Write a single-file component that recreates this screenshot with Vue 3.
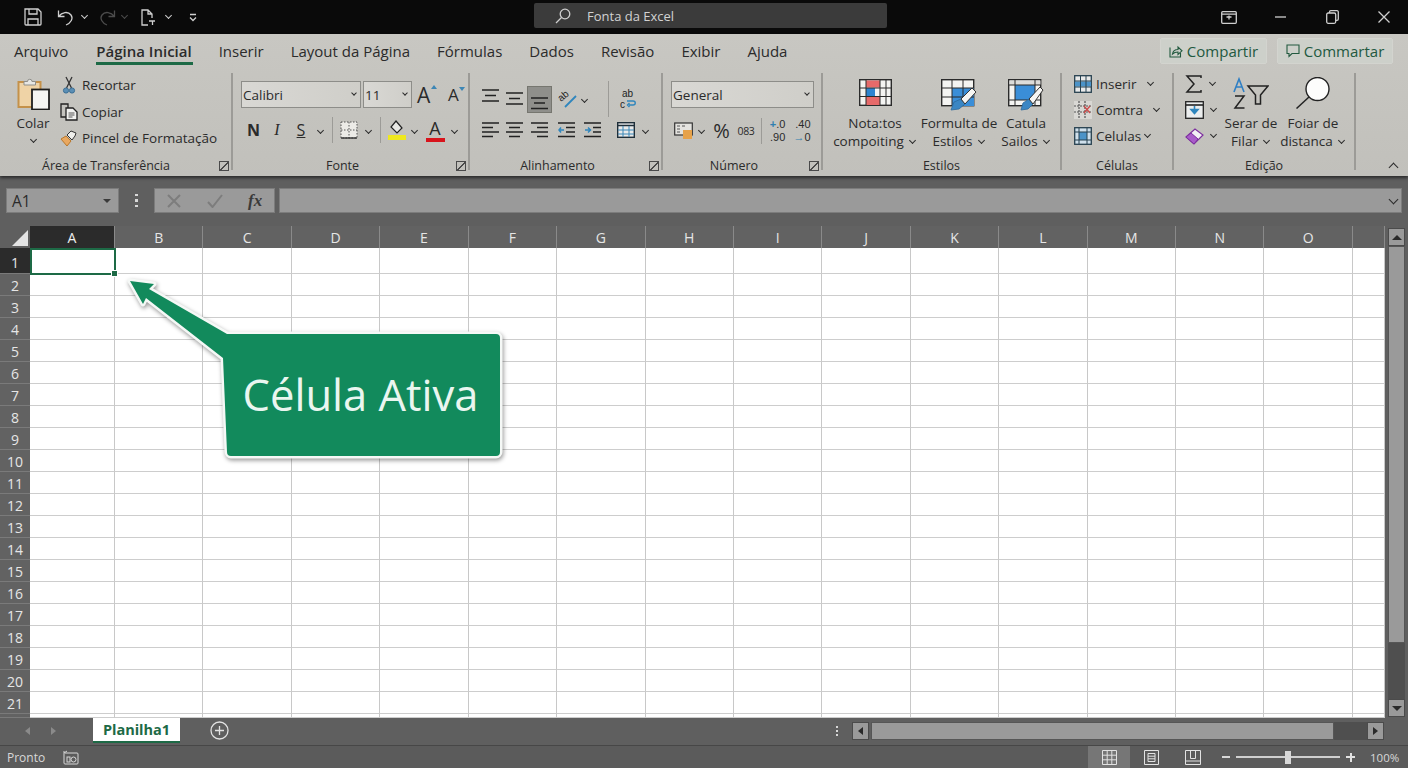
<script setup>
const tabs = ['Arquivo', 'Página Inicial', 'Inserir', 'Layout da Página', 'Fórmulas', 'Dados', 'Revisão', 'Exibir', 'Ajuda']
const cols = ['A', 'B', 'C', 'D', 'E', 'F', 'G', 'H', 'I', 'J', 'K', 'L', 'M', 'N', 'O', '']
const rows = Array.from({ length: 21 }, (_, i) => i + 1)
</script>

<template>
  <div class="app">
    <!-- title bar -->
    <header class="titlebar">
      <div class="qat">
        <svg class="ic-save" width="18" height="18" viewBox="0 0 18 18"><path d="M1 1h13l3 3v12a1 1 0 0 1-1 1H2a1 1 0 0 1-1-1z M5 1v5h8V1 M4 17v-6h10v6" /></svg>
        <svg class="ic-undo" width="17" height="17" viewBox="0 0 17 17"><path d="M1.500 1.500v6h6 M1.500 7.500C5 3 11 2 14 6c2.500 3.500 0 8-5 10" /></svg>
        <span class="chev light c-undo"></span>
        <svg class="ic-redo" width="17" height="17" viewBox="0 0 17 17"><path d="M15.500 1.500v6h-6 M15.500 7.500C12 3 6 2 3 6c-2.500 3.500 0 8 5 10" /></svg>
        <span class="chev dim c-redo"></span>
        <svg class="ic-new" width="17" height="17" viewBox="0 0 17 17"><path d="M8 16H2V1h6l4 4v4 M8 1v4h4 M9 12h6 M12.500 12v4" /></svg>
        <span class="chev light c-new"></span>
        <svg class="ic-more" width="8" height="9" viewBox="0 0 8 9"><path d="M1 1.500h6 M1 4.500l3 3 3-3" /></svg>
      </div>
      <div class="search">
        <svg width="16" height="16" viewBox="0 0 16 16"><circle cx="10" cy="6" r="4.800" /><path d="M6.500 9.500L1 15" /></svg>
        <span>Fonta da Excel</span>
      </div>
      <div class="winctl">
        <svg class="w-disp" width="16" height="13" viewBox="0 0 16 13"><rect x="0.700" y="0.700" width="14.600" height="11.600" rx="1" /><path d="M1 3.200h14 M5.500 6h5 M8 4.500v4" /></svg>
        <svg class="w-min" width="11" height="2" viewBox="0 0 11 2"><path d="M0 1h11" /></svg>
        <svg class="w-rest" width="13" height="14" viewBox="0 0 13 14"><rect x="0.700" y="3" width="9" height="10.300" rx="1.500" /><path d="M3.500 3V2a1.300 1.300 0 0 1 1.300-1.300h6A1.300 1.300 0 0 1 12.300 2v7a1.300 1.300 0 0 1-1.300 1.300h-1.300" /></svg>
        <svg class="w-close" width="12" height="12" viewBox="0 0 12 12"><path d="M0.500 0.500l11 11 M11.500 0.500l-11 11" /></svg>
      </div>
    </header>

    <!-- ribbon -->
    <section class="ribbon">
      <nav class="tabs">
        <span v-for="t in tabs" :key="t" class="tab" :class="{ active: t === 'Página Inicial' }">{{ t }}</span>
        <div class="share">
          <button class="sbtn">
            <svg width="14" height="14" viewBox="0 0 14 14"><path d="M1 3.500V13h10.500V9 M3.500 10c.5-3 2.500-4.500 5.500-4.500V3l4 3.800-4 3.700V8C6.500 8 5 8.500 3.500 10z" /></svg>
            Compartir
          </button>
          <button class="sbtn cmt">
            <svg width="14" height="14" viewBox="0 0 14 14"><path d="M1 1h12v8.500H6L3 12.500v-3H1z" /></svg>
            Commartar
          </button>
        </div>
      </nav>

      <div class="groups">
        <!-- Área de Transferência -->
        <div class="group g-clip">
          <div class="body clip-body">
            <div class="colar">
              <svg width="33" height="33" viewBox="0 0 33 33" class="multi">
                <rect x="1.500" y="5" width="22" height="25" fill="#efd3a6" stroke="#c4914a" stroke-width="2" />
                <path d="M7 8V4.500h3.500a2.200 2.200 0 0 1 4.500 0H18.500V8z" fill="#e7e7e4" stroke="#8f8f8b" />
                <rect x="15" y="12.500" width="17" height="20" fill="#f5f5f3" stroke="#1e1e1e" stroke-width="1.800" />
              </svg>
              <span class="txt">Colar</span>
              <span class="chev"></span>
            </div>
            <div class="cliplist">
              <div class="cliprow">
                <svg class="multi" width="18" height="18" viewBox="0 0 18 18"><path d="M6 1l5.500 11 M12 1L6.500 12" stroke="#333" stroke-width="1.300" /><circle cx="6" cy="14.500" r="2.600" fill="#5b8fb5" stroke="#3d6f94" /><circle cx="12" cy="14.500" r="2.600" fill="#5b8fb5" stroke="#3d6f94" /></svg>
                <span class="txt">Recortar</span>
              </div>
              <div class="cliprow">
                <svg class="multi" width="18" height="18" viewBox="0 0 18 18"><path d="M6 14H1V1h7v4" stroke="#222" stroke-width="1.300" fill="none" /><path d="M6 5h7l4 4v8H6z" fill="#f2f2f0" stroke="#222" stroke-width="1.300" /><path d="M8.500 10h6 M8.500 12h6 M8.500 14h4" stroke="#555" /></svg>
                <span class="txt">Copiar</span>
              </div>
              <div class="cliprow">
                <svg class="multi" width="18" height="18" viewBox="0 0 18 18"><path d="M1 10l6 7 4-5-5-5z" fill="#e9a860" stroke="#b9782c" /><path d="M7 6l4-4 5 2-1 3-3 4z" fill="#efefec" stroke="#333" /></svg>
                <span class="txt">Pincel de Formatação</span>
              </div>
            </div>
          </div>
          <div class="glabel"><span>Área de Transferência</span><i class="launch"></i></div>
        </div>

        <!-- Fonte -->
        <div class="group g-font">
          <div class="body">
            <div class="row1">
              <div class="select s-font"><span>Calibri</span><span class="chev"></span></div>
              <div class="select s-size"><span>11</span><span class="chev"></span></div>
              <span class="growa">A<i class="tri up"></i></span>
              <span class="growa small">A<i class="tri down"></i></span>
            </div>
            <div class="row2 grid-font">
              <b class="fmt">N</b>
              <i class="fmt serif">I</i>
              <span class="fmt under">S</span>
              <span class="chev"></span>
              <span class="vsep"></span>
              <svg width="18" height="18" viewBox="0 0 18 18" class="multi"><rect x="1" y="1" width="16" height="16" fill="#ecebe7" /><path d="M1 1h16v16H1z M9 1v16 M1 9h16" stroke="#555" stroke-dasharray="1.500 1.500" /><path d="M1 17h16" stroke="#333" stroke-width="1.400" /></svg>
              <span class="chev"></span>
              <span class="vsep"></span>
              <svg width="20" height="20" viewBox="0 0 20 20" class="multi"><path d="M9 1l6 7-5 5-6-6z" fill="#e8e8e4" stroke="#222" stroke-width="1.200" /><rect x="1" y="15" width="18" height="5" fill="#efe81e" /></svg>
              <span class="chev"></span>
              <span class="fonta">A</span>
              <span class="chev"></span>
            </div>
          </div>
          <div class="glabel"><span>Fonte</span><i class="launch"></i></div>
        </div>

        <!-- Alinhamento -->
        <div class="group g-align">
          <div class="body">
            <div class="row1 grid-al1">
              <svg class="al" width="17" height="21" viewBox="0 0 17 21"><path d="M0 1h17 M3 6.500h11 M0 12h17" /></svg>
              <svg class="al" width="17" height="21" viewBox="0 0 17 21"><path d="M0 4h17 M3 9.500h11 M0 15h17" /></svg>
              <span class="albtn"><svg class="al" width="17" height="21" viewBox="0 0 17 21"><path d="M0 9h17 M3 14h11 M0 19.500h17" /></svg></span>
              <svg class="multi open" width="21" height="20" viewBox="0 0 21 20"><text x="5" y="13" transform="rotate(-40 5 13)" class="icotext">ab</text><path d="M9 18L20 7" stroke="#2f86bd" stroke-width="1.800" /></svg>
              <span class="chev"></span>
              <span class="vsep tall end"></span>
              <svg class="multi" width="18" height="23" viewBox="0 0 18 23"><text x="3" y="9" class="icotext">ab</text><text x="1" y="20" class="icotext">c</text><path d="M8 13h6c3 0 3 4 0 4h-4 M10.500 15l-2 2 2 2" stroke="#2f86bd" stroke-width="1.400" fill="none" /></svg>
            </div>
            <div class="row2 grid-al2">
              <svg class="al" width="17" height="16" viewBox="0 0 17 16"><path d="M0 1h17 M0 5.500h11 M0 10h17 M0 14.500h11" /></svg>
              <svg class="al" width="17" height="16" viewBox="0 0 17 16"><path d="M0 1h17 M3 5.500h11 M0 10h17 M3 14.500h11" /></svg>
              <svg class="al" width="17" height="16" viewBox="0 0 17 16"><path d="M0 1h17 M6 5.500h11 M0 10h17 M6 14.500h11" /></svg>
              <svg class="multi" width="17" height="16" viewBox="0 0 17 16"><path d="M0 1h17 M8 5.500h9 M8 10h9 M0 14.500h17" stroke="#222" stroke-width="1.300" /><path d="M1 8h5 M3 5.500L1 8l2 2.500" stroke="#2f86bd" stroke-width="1.500" fill="none" /></svg>
              <svg class="multi" width="17" height="16" viewBox="0 0 17 16"><path d="M0 1h17 M9 5.500h8 M9 10h8 M0 14.500h17" stroke="#222" stroke-width="1.300" /><path d="M1 8h5 M4 5.500L6.500 8 4 10.500" stroke="#2f86bd" stroke-width="1.500" fill="none" /></svg>
              <span></span>
              <svg class="multi" width="18" height="16" viewBox="0 0 18 16"><rect x="0.700" y="0.700" width="16.600" height="14.600" fill="#e9eaea" stroke="#1f2f3a" stroke-width="1.400" /><path d="M1 3.500h16" stroke="#1f2f3a" stroke-width="1.500" /><path d="M1 8h16 M1 12h16 M6 4v11 M12 4v11" stroke="#3a88b8" /></svg>
              <span class="chev"></span>
            </div>
          </div>
          <div class="glabel"><span>Alinhamento</span><i class="launch"></i></div>
        </div>

        <!-- Número -->
        <div class="group g-num">
          <div class="body">
            <div class="row1">
              <div class="select s-gen"><span>General</span><span class="chev"></span></div>
            </div>
            <div class="row2 grid-num">
              <svg class="multi" width="19" height="18" viewBox="0 0 19 18"><rect x="0.700" y="1" width="17.600" height="12" fill="#e4e3df" stroke="#333" stroke-width="1.200" /><path d="M3 4h3 M3 7h3 M3 10h3 M8 4h3" stroke="#555" /><rect x="9" y="8" width="9" height="9" fill="#e6a24a" /></svg>
              <span class="chev"></span>
              <span class="pct">%</span>
              <span class="thou">083</span>
              <span class="vsep"></span>
              <span class="dec"><span><b>+</b>.0</span><span>.90</span></span>
              <span class="dec"><span>.40</span><span><b>→</b>0</span></span>
            </div>
          </div>
          <div class="glabel"><span>Número</span><i class="launch"></i></div>
        </div>

        <!-- Estilos -->
        <div class="group g-style">
          <div class="body big-row">
            <div class="big b1">
              <svg class="multi" width="33" height="27" viewBox="0 0 33 27">
                <rect x="0.700" y="0.700" width="31.600" height="25.600" fill="#f4f4f2" stroke="#2b2b2b" stroke-width="1.400" />
                <rect x="7" y="1.500" width="14" height="7" fill="#e66a6a" />
                <rect x="7" y="18" width="14" height="8" fill="#e66a6a" />
                <rect x="7" y="9" width="9" height="8.500" fill="#2d84d0" />
                <path d="M1 9h31 M1 17.500h31 M7 1v25 M21 1v25 M27 1v25" stroke="#2b2b2b" stroke-width="1" />
              </svg>
              <span class="txt">Nota:tos</span>
              <span class="txt">compoiting<span class="chev inl"></span></span>
            </div>
            <div class="big b2">
              <svg class="multi" width="36" height="32" viewBox="0 0 36 32">
                <rect x="0.700" y="0.700" width="32" height="26" fill="#f4f4f2" stroke="#2b2b2b" stroke-width="1.400" />
                <rect x="11" y="9" width="22" height="18" fill="#3a8ed8" />
                <path d="M1 9h32 M1 18h32 M11 1v26 M22 1v26" stroke="#2b2b2b" stroke-width="1" />
                <path d="M10 31l3-8 7-3 4 5-6 5z" fill="#3a86c4" stroke="#2c6a9c" stroke-width="0.800" />
                <path d="M20 20L31 9l4 4-11 12z" fill="#f6f6f4" stroke="#333" stroke-width="1" />
              </svg>
              <span class="txt">Formulta de</span>
              <span class="txt">Estilos<span class="chev inl"></span></span>
            </div>
            <div class="big b3">
              <svg class="multi" width="36" height="32" viewBox="0 0 36 32">
                <rect x="0.700" y="0.700" width="32" height="26" fill="#f4f4f2" stroke="#2b2b2b" stroke-width="1.400" />
                <rect x="1.500" y="1.500" width="31" height="4.500" fill="#dcdcda" />
                <rect x="7" y="6" width="20" height="15" fill="#3a8ed8" />
                <path d="M1 6h32 M1 21h32 M7 1v26 M27 1v26" stroke="#2b2b2b" stroke-width="1" />
                <path d="M13 31l2-7 6-4 4 5-5 5z" fill="#3a86c4" stroke="#2c6a9c" stroke-width="0.800" />
                <path d="M21 20L32 8l3 3-10 14z" fill="#f6f6f4" stroke="#333" stroke-width="1" />
              </svg>
              <span class="txt">Catula</span>
              <span class="txt">Sailos<span class="chev inl"></span></span>
            </div>
          </div>
          <div class="glabel"><span>Estilos</span></div>
        </div>

        <!-- Células -->
        <div class="group g-cell">
          <div class="body celllist">
            <div class="cliprow">
              <svg class="multi" width="18" height="18" viewBox="0 0 18 18"><rect x="0.700" y="0.700" width="16.600" height="16.600" fill="#e9eaea" stroke="#26404f" stroke-width="1.300" /><rect x="1" y="6.500" width="16" height="5" fill="#4b93c8" /><path d="M1 6h16 M1 12h16 M6.500 1v16 M12 1v16" stroke="#26404f" /></svg>
              <span class="txt">Inserir</span><span class="chev m-ins"></span>
            </div>
            <div class="cliprow">
              <svg class="multi" width="18" height="18" viewBox="0 0 18 18"><rect x="0" y="0" width="18" height="18" fill="#d9d8d4" /><path d="M0 5h18 M0 11h18 M5 0v18 M11 0v18" stroke="#555" stroke-width="1.200" stroke-dasharray="2 1" /><path d="M10 5l6 7 M16 5l-6 7" stroke="#cc4b4b" stroke-width="1.300" /></svg>
              <span class="txt">Comtra</span><span class="chev m-ins"></span>
            </div>
            <div class="cliprow">
              <svg class="multi" width="18" height="18" viewBox="0 0 18 18"><rect x="0.700" y="0.700" width="16.600" height="16.600" fill="#cfe0ec" stroke="#26404f" stroke-width="1.300" /><rect x="5" y="5" width="8" height="8" fill="#4b93c8" /><path d="M1 5h16 M1 13h16 M5 1v16 M13 1v16" stroke="#26404f" /></svg>
              <span class="txt">Celulas</span><span class="chev"></span>
            </div>
          </div>
          <div class="glabel"><span>Células</span></div>
        </div>

        <!-- Edição -->
        <div class="group g-edit">
          <div class="body big-row edit-row">
            <div class="editlist">
              <div class="cliprow">
                <svg class="ic-dark" width="18" height="18" viewBox="0 0 18 18"><path d="M16 3V1H2l7 8-7 8h14v-2" /></svg>
                <span class="chev m-ed"></span>
              </div>
              <div class="cliprow">
                <svg class="multi" width="19" height="18" viewBox="0 0 19 18"><rect x="0.700" y="0.700" width="17.600" height="16.600" fill="#eceeee" stroke="#222" stroke-width="1.300" /><path d="M1 4h17" stroke="#222" stroke-width="1.600" /><path d="M9.500 5v6 M6 8.500h7l-3.500 4z" stroke="#2f86bd" fill="#2f86bd" stroke-width="1.600" /></svg>
                <span class="chev m-ed"></span>
              </div>
              <div class="cliprow">
                <svg class="multi" width="19" height="18" viewBox="0 0 19 18"><path d="M1 10l9-8 8 6-9 9z" fill="#f2f0f4" stroke="#7d2f9e" stroke-width="1.200" /><path d="M1 10l5-4 7 6-4 5z" fill="#a85cc9" stroke="#7d2f9e" /></svg>
                <span class="chev m-ed"></span>
              </div>
            </div>
            <div class="big b-sort">
              <svg class="multi" width="36" height="32" viewBox="0 0 36 32">
                <path d="M1 15L6 2l5 13 M3 10h6" stroke="#2f7fc4" stroke-width="1.600" fill="none" />
                <path d="M2 19h9l-9 12h9.500" stroke="#222" stroke-width="1.500" fill="none" />
                <path d="M15 9h20l-7.500 9v9h-5v-9z" stroke="#222" stroke-width="1.500" fill="none" />
              </svg>
              <span class="txt">Serar de</span>
              <span class="txt">Filar<span class="chev inl"></span></span>
            </div>
            <div class="big b-find">
              <svg class="multi" width="34" height="32" viewBox="0 0 34 32">
                <circle cx="21.500" cy="12" r="11.500" fill="#fdfdfc" stroke="#222" stroke-width="1.400" />
                <path d="M13 20L0.500 31.500" stroke="#222" stroke-width="1.500" />
              </svg>
              <span class="txt">Foiar de</span>
              <span class="txt">distanca<span class="chev inl"></span></span>
            </div>
          </div>
          <div class="glabel"><span>Edição</span></div>
        </div>

        <div class="collapse"><span class="chev upc"></span></div>
      </div>
    </section>

    <!-- formula bar -->
    <section class="fbar">
      <div class="namebox"><span>A1</span><i class="tri-down"></i></div>
      <div class="dots"><i></i><i></i><i></i></div>
      <div class="fxbox">
        <svg width="14" height="14" viewBox="0 0 14 14" class="fx-i"><path d="M1 1l12 12 M13 1L1 13" /></svg>
        <svg width="16" height="14" viewBox="0 0 16 14" class="fx-i"><path d="M1 8l4.500 5L15 1" /></svg>
        <span class="fx">fx</span>
      </div>
      <div class="finput"><span class="chev fchev"></span></div>
    </section>

    <!-- grid -->
    <section class="gridwrap">
      <div class="sheet">
        <div class="corner"><i></i></div>
        <div v-for="(c, i) in cols" :key="'h' + i" class="colh" :class="{ on: c === 'A' }">{{ c }}</div>
        <template v-for="r in rows" :key="r">
          <div class="rowh" :class="{ on: r === 1 }">{{ r }}</div>
          <div v-for="(c, i) in cols" :key="i" class="cell">
            <template v-if="r === 1 && c === 'A'">
              <div class="selected"><i class="handle"></i></div>
            </template>
          </div>
        </template>
        <div class="rowh"></div>
        <div v-for="(c, i) in cols" :key="'t' + i" class="cell"></div>
      </div>
      <div class="vscroll">
        <div class="sbtn2"><i class="tri-up"></i></div>
        <div class="vthumb"></div>
        <div class="vtrack"></div>
        <div class="sbtn2"><i class="tri-down dark"></i></div>
      </div>
    </section>

    <!-- sheet tabs -->
    <section class="sheetbar">
      <div class="tabnav"><i class="tri-l"></i><i class="tri-r"></i></div>
      <div class="sheettab">Planilha1</div>
      <svg class="addsheet" width="19" height="19" viewBox="0 0 19 19"><circle cx="9.500" cy="9.500" r="8.500" /><path d="M9.500 5v9 M5 9.500h9" /></svg>
      <div class="dots small"><i></i><i></i><i></i></div>
      <div class="hscroll">
        <div class="hbtn"><i class="tri-l dark"></i></div>
        <div class="hthumb"></div>
        <div class="htrack"></div>
        <div class="hbtn"><i class="tri-r dark"></i></div>
      </div>
    </section>

    <!-- status bar -->
    <footer class="status">
      <span class="pronto">Pronto</span>
      <svg class="macro" width="16" height="15" viewBox="0 0 16 15"><path d="M2 3h12a1 1 0 0 1 1 1v9a1 1 0 0 1-1 1H2a1 1 0 0 1-1-1V1 M1 3L4 1" /><rect x="4" y="7" width="3" height="5" /><circle cx="10.500" cy="9.500" r="2.500" /></svg>
      <div class="views">
        <div class="view on"><svg width="15" height="15" viewBox="0 0 15 15"><path d="M.5.500h14v14H.5z M.5 5.200h14 M.5 9.800h14 M5.200.500v14 M9.800.500v14" /></svg></div>
        <div class="view"><svg width="15" height="15" viewBox="0 0 15 15"><path d="M.5.500h14v14H.5z M4 3.500h7v8H4z M4 6.200h7 M4 8.800h7" /></svg></div>
        <div class="view"><svg width="16" height="15" viewBox="0 0 16 15"><path d="M.5.500h15v14H.5z M5.500.500v8h5v-8 M.5 11h15" /></svg></div>
      </div>
      <div class="zoombar">
        <i class="zminus"></i>
        <div class="slider"><i></i></div>
        <i class="zplus"></i>
      </div>
      <span class="pct100">100%</span>
    </footer>

    <!-- callout over the grid -->
    <div class="callout">
      <svg width="390" height="200" viewBox="0 0 390 200">
        <path d="M10 11L34 14 29 19 107 64H376a4 4 0 0 1 4 4V182a4 4 0 0 1-4 4H111a4 4 0 0 1-4-4L103 88 26 28 23 34z" />
      </svg>
      <div class="calltext">Célula Ativa</div>
    </div>
  </div>
</template>

<style>
html, body { margin: 0; background: #5f5f5f; }
</style>

<style scoped>
.app {
  position: relative;
  width: 1408px;
  height: 768px;
  overflow: hidden;
  display: flex;
  flex-direction: column;
  font-family: "Open Sans", "Liberation Sans", sans-serif;
  color: #2b2b2b;
  background: #5f5f5f;
}

svg { fill: none; display: block; flex-shrink: 0; }
svg.open { overflow: visible; }
i { font-style: normal; }

.icotext {
  font: 10px "Liberation Sans", sans-serif;
  fill: #222;
}

/* chevrons */
.chev {
  display: inline-block;
  width: 4px;
  height: 4px;
  border-right: 1.300px solid #2b2b2b;
  border-bottom: 1.300px solid #2b2b2b;
  transform: rotate(45deg);
  flex-shrink: 0;
}
.chev.light { border-color: #cfcfcf; }
.chev.dim { border-color: #4c4c4c; }
.chev.inl { margin: 0 2px 3px 6px; vertical-align: middle; }
.chev.upc { transform: rotate(225deg); width: 6px; height: 6px; border-width: 1.600px; }
.m-ins { margin-left: 7px; }
.m-ed { margin-left: 3px; }

/* title bar */
.titlebar {
  height: 34px;
  background: #0a0a0a;
  display: flex;
  align-items: center;
  flex-shrink: 0;
}
.titlebar svg { stroke: #cfcfcf; stroke-width: 1.300; }
.qat {
  width: 534px;
  display: flex;
  align-items: center;
  padding-left: 24px;
  box-sizing: border-box;
}
.ic-undo { margin-left: 15px; }
.c-undo { margin-left: 8px; margin-bottom: 3px; }
.titlebar .ic-redo { margin-left: 12px; stroke: #4c4c4c; }
.c-redo { margin-left: 6px; margin-bottom: 3px; }
.ic-new { margin-left: 13px; }
.c-new { margin-left: 9px; margin-bottom: 3px; }
.ic-more { margin-left: 18px; }
.search {
  width: 353px;
  height: 25px;
  margin-top: -3px;
  background: #3b3b3b;
  border-radius: 2px;
  display: flex;
  align-items: center;
  gap: 16px;
  padding-left: 21px;
  box-sizing: border-box;
  color: #d2d2d2;
  font-size: 13px;
}
.winctl {
  flex: 1;
  display: flex;
  align-items: center;
  padding-left: 334px;
}
.w-min { margin-left: 38px; }
.w-rest { margin-left: 40px; }
.w-close { margin-left: 39px; }

/* ribbon */
.ribbon {
  height: 142px;
  flex-shrink: 0;
  background: linear-gradient(#c8c7c2, #c1c0bb);
  box-shadow: 0 2px 3px rgba(0, 0, 0, 0.55);
  position: relative;
  z-index: 2;
}
.tabs {
  height: 34px;
  display: flex;
  align-items: center;
  gap: 27px;
  padding-left: 14px;
  font-size: 15px;
}
.tab {
  position: relative;
  line-height: 34px;
  white-space: nowrap;
}
.tab:first-child { margin-right: 1px; }
.tab.active { font-weight: 600; }
.tab.active::after {
  content: "";
  position: absolute;
  left: 0;
  right: -1px;
  bottom: 3px;
  height: 3px;
  background: #1d6a46;
}
.share {
  margin-left: auto;
  display: flex;
  gap: 10px;
  padding-right: 15px;
}
.sbtn {
  width: 107px;
  height: 26px;
  padding: 0;
  border: 1px solid #d3d4cf;
  border-radius: 2px;
  background: #cdd0ca;
  color: #22593f;
  font: 500 15px "Open Sans", sans-serif;
  display: flex;
  align-items: center;
  justify-content: center;
  gap: 4px;
}
.sbtn.cmt { width: 116px; }
.sbtn svg { stroke: #22593f; stroke-width: 1.100; }

.groups {
  display: flex;
  margin-top: 5px;
  height: 97px;
  font-size: 13.500px;
}
.group {
  display: flex;
  flex-direction: column;
  box-sizing: border-box;
  border-right: 2px solid #9c9b97;
  flex-shrink: 0;
}
.g-clip { width: 233px; }
.g-font { width: 237px; padding-left: 8px; }
.g-align { width: 193px; padding-left: 8px; }
.g-num { width: 160px; padding-left: 8px; }
.g-style { width: 239px; padding-left: 10px; }
.g-cell { width: 112px; padding-left: 12px; }
.g-edit { width: 182px; padding-left: 11px; }
.g-style .glabel { margin-left: -10px; }
.g-cell .glabel { margin-left: -12px; }
.g-edit .glabel { margin-left: -11px; }
.collapse {
  flex: 1;
  display: flex;
  justify-content: flex-end;
  align-items: flex-end;
  padding: 0 11px 0 0;
  height: 98px;
}
.body {
  height: 85px;
  flex-shrink: 0;
  box-sizing: border-box;
  padding-top: 8px;
}
.glabel {
  height: 16px;
  line-height: 16px;
  flex-shrink: 0;
  display: flex;
  align-items: center;
  font-size: 12.500px;
}
.glabel span { flex: 1; text-align: center; }
.launch {
  width: 8px;
  height: 8px;
  margin: 0 2px 0 12px;
  border: 1px solid #4a4a4a;
  background: linear-gradient(135deg, transparent 45%, #4a4a4a 45%, #4a4a4a 60%, transparent 60%);
}
.g-clip .launch { margin-left: 7px; }
.txt { white-space: nowrap; line-height: 18px; }

/* clipboard */
.clip-body { display: flex; padding-top: 0; }
.colar {
  width: 46px;
  margin-left: 10px;
  padding-top: 4px;
  display: flex;
  flex-direction: column;
  align-items: center;
}
.colar .txt { margin-top: 4px; }
.colar .chev { margin-top: 5px; }
.cliplist { margin-left: 4px; margin-top: -1px; }
.cliprow {
  height: 26.500px;
  display: flex;
  align-items: center;
  gap: 4px;
}
.cliprow .chev { margin-bottom: 3px; }
.celllist .cliprow, .editlist .cliprow { height: 26px; }

/* fonte */
.row1 { height: 27px; display: flex; align-items: center; }
.row2 { height: 26px; margin-top: 9px; display: grid; align-items: center; justify-items: center; }
.select {
  height: 27px;
  box-sizing: border-box;
  border: 1.500px solid #8d8d89;
  background: linear-gradient(90deg, #d9d8d4, #cfcec9);
  display: flex;
  align-items: center;
  justify-content: space-between;
  padding: 0 4px 0 1px;
  font-size: 13.500px;
}
.select .chev { margin-bottom: 3px; width: 3px; height: 3px; }
.s-font { width: 120px; }
.s-size { width: 49px; margin-left: 2px; }
.s-gen { width: 143px; }
.growa { font-size: 21px; position: relative; margin-left: 5px; width: 26px; }
.growa.small { font-size: 17px; width: 20px; }
.tri {
  position: absolute;
  top: 4px;
  left: 14px;
  border-left: 3px solid transparent;
  border-right: 3px solid transparent;
}
.tri.up { border-bottom: 4px solid #3c86b5; }
.tri.down { border-top: 4px solid #3c86b5; left: 11px; }
.grid-font { grid-template-columns: 23px 24px 24px 14px 10px 24px 14px 10px 24px 10px 32px 6px; margin-left: 1px; }
.fmt { font-size: 16px; }
b.fmt { font-weight: 700; }
.serif { font-family: "Liberation Serif", serif; font-style: italic; font-size: 16px; }
.under { text-decoration: underline; }
.vsep { width: 1px; height: 26px; background: #9c9b97; }
.vsep.tall { height: 36px; align-self: start; }
.vsep.end { justify-self: end; margin-right: 1px; }
.fonta {
  font-size: 18px;
  line-height: 20px;
  border-bottom: 4px solid #d8141c;
  width: 19px;
  text-align: center;
  height: 20px;
}

/* alinhamento */
.al { stroke: #222; stroke-width: 1.400; }
.g-align .row1 { display: grid; align-items: center; justify-items: center; }
.grid-al1 { grid-template-columns: 24px 25px 25px 28px 8px 22px 35px; }
.grid-al2 { grid-template-columns: 24px 25px 25px 28px 24px 6px 32px 6px; }
.albtn {
  width: 25px;
  height: 27px;
  background: #8f8f8b;
  border: 1px solid #76766f;
  box-sizing: border-box;
  display: flex;
  align-items: center;
  justify-content: center;
}

/* numero */
.grid-num { grid-template-columns: 25px 10px 31px 18px 12px 21px 28px; }
.pct { font-size: 20px; }
.thou { font-size: 10.500px; letter-spacing: -0.300px; }
.dec {
  display: flex;
  flex-direction: column;
  align-items: flex-end;
  font: 11px/12.700px "Liberation Sans", sans-serif;
}
.dec b { color: #2f7fb0; font-weight: 700; }

/* estilos */
.big-row { display: flex; padding-top: 6px; }
.big {
  display: flex;
  flex-direction: column;
  align-items: center;
  flex-shrink: 0;
}
.big svg { margin-bottom: 8px; }
.b1 { width: 84px; }
.b2 { width: 76px; margin-left: 4px; }
.b2 svg, .b3 svg { margin-bottom: 3px; }
.b3 { width: 50px; margin-left: 4px; }

.celllist { padding-top: 0; margin-top: -2px; height: 87px; }

/* edicao */
.edit-row { padding-top: 0; }
.editlist { width: 38px; margin-top: -2px; }
.b-sort { width: 56px; padding-top: 4px; margin-left: 0; }
.b-sort svg, .b-find svg { margin-bottom: 5px; }
.b-find { width: 60px; padding-top: 4px; margin-left: 4px; }
.ic-dark { stroke: #222; stroke-width: 1.500; }

/* formula bar */
.fbar {
  height: 50px;
  flex-shrink: 0;
  box-sizing: border-box;
  padding: 12px 6px 13px;
  display: flex;
  align-items: stretch;
  background: #5f5f5f;
}
.namebox {
  width: 113px;
  box-sizing: border-box;
  background: #9a9a9a;
  border: 1px solid #7c7c7c;
  display: flex;
  align-items: center;
  justify-content: space-between;
  padding: 0 7px 0 5px;
  font-size: 15.500px;
}
.dots {
  width: 35px;
  display: flex;
  flex-direction: column;
  align-items: center;
  justify-content: center;
  gap: 3px;
}
.dots i { width: 2.500px; height: 2.500px; background: #d8d8d8; }
.dots.small { margin-left: auto; width: 14px; gap: 2px; }
.dots.small i { width: 2px; height: 2px; }
.fxbox {
  width: 121px;
  box-sizing: border-box;
  background: #9a9a9a;
  border: 1px solid #7c7c7c;
  display: flex;
  align-items: center;
  padding-left: 12px;
  gap: 26px;
}
.fx-i { stroke: #7d7d7d; stroke-width: 2; }
.fx {
  font: italic 700 17px "Liberation Serif", serif;
  color: #3a3a3a;
  margin-left: -1px;
}
.finput {
  flex: 1;
  margin-left: 4px;
  background: #9a9a9a;
  border: 1px solid #7c7c7c;
  display: flex;
  align-items: center;
  justify-content: flex-end;
  padding-right: 4px;
}
.fchev { width: 6px; height: 6px; border-width: 1.600px; margin-bottom: 3px; }
.tri-down {
  width: 0;
  height: 0;
  border-left: 4px solid transparent;
  border-right: 4px solid transparent;
  border-top: 4px solid #3a3a3a;
}

/* grid */
.gridwrap {
  height: 492px;
  flex-shrink: 0;
  display: flex;
}
.sheet {
  width: 1385px;
  flex-shrink: 0;
  display: grid;
  grid-template-columns: 30px 85px repeat(14, 88.430px) 1fr;
  grid-template-rows: 22px 26px repeat(20, 22px) 4px;
  background: #fff;
  overflow: hidden;
}
.corner {
  background: #5f5f5f;
  display: flex;
  align-items: flex-end;
  justify-content: flex-end;
  padding: 0 2px 2px 0;
  box-sizing: border-box;
}
.corner i {
  width: 0;
  height: 0;
  border-left: 16px solid transparent;
  border-bottom: 16px solid #e4e4e4;
}
.colh {
  background: #626262;
  color: #e6e6e6;
  font-size: 14px;
  line-height: 24px;
  text-align: center;
  box-sizing: border-box;
  border-right: 1px solid #8a8a8a;
}
.colh.on { background: #2b2b2b; color: #eee; }
.rowh {
  background: #626262;
  color: #e6e6e6;
  font-size: 14px;
  display: flex;
  align-items: center;
  justify-content: center;
  box-sizing: border-box;
  border-bottom: 1px solid #7a7a7a;
  padding-top: 2px;
}
.rowh.on { background: #2b2b2b; padding-top: 4px; }
.cell {
  box-sizing: border-box;
  border-right: 1px solid #c8c8c8;
  border-bottom: 1px solid #cdcdcd;
  position: relative;
}
.selected {
  position: absolute;
  inset: 0 -2px -2px 0;
  border: 2px solid #1d6a46;
  z-index: 1;
}
.handle {
  position: absolute;
  right: -4px;
  bottom: -4px;
  width: 5px;
  height: 5px;
  background: #1d6a46;
  border: 1px solid #fff;
}

/* vertical scroll */
.vscroll {
  flex: 1;
  display: flex;
  flex-direction: column;
  align-items: center;
  padding: 2px 3px 1px 3px;
  box-sizing: border-box;
  background: #5f5f5f;
}
.sbtn2 {
  width: 17px;
  height: 18px;
  flex-shrink: 0;
  background: #9a9a9a;
  border: 1px solid #4b4b4b;
  box-sizing: border-box;
  display: flex;
  align-items: center;
  justify-content: center;
}
.tri-up {
  width: 0;
  height: 0;
  border-left: 5px solid transparent;
  border-right: 5px solid transparent;
  border-bottom: 5px solid #2a2a2a;
}
.tri-down.dark { border-left-width: 5px; border-right-width: 5px; border-top: 5px solid #2a2a2a; }
.vthumb {
  width: 17px;
  height: 397px;
  flex-shrink: 0;
  box-sizing: border-box;
  background: #9a9a9a;
  border: 1px solid #565656;
}
.vtrack { flex: 1; width: 17px; background: #4f4f4f; }

/* sheet tabs */
.sheetbar {
  height: 27px;
  flex-shrink: 0;
  display: flex;
  align-items: flex-start;
  background: #5f5f5f;
  padding-right: 24px;
  box-sizing: border-box;
}
.tabnav {
  width: 93px;
  height: 25px;
  flex-shrink: 0;
  display: flex;
  align-items: center;
  padding-left: 25px;
  gap: 21px;
  box-sizing: border-box;
}
.tri-l, .tri-r {
  width: 0;
  height: 0;
  border-top: 4px solid transparent;
  border-bottom: 4px solid transparent;
}
.tri-l { border-right: 5px solid #8a8a8a; }
.tri-r { border-left: 5px solid #8a8a8a; }
.tri-l.dark { border-right-color: #2a2a2a; }
.tri-r.dark { border-left-color: #2a2a2a; }
.sheettab {
  width: 87px;
  height: 25px;
  line-height: 24px;
  text-align: center;
  background: #fff;
  border-bottom: 2px solid #1d6a46;
  color: #1d6a46;
  font-size: 14.500px;
  font-weight: 700;
  box-sizing: border-box;
  flex-shrink: 0;
}
.addsheet { margin: 3px 0 0 30px; stroke: #e2e2e2; stroke-width: 1.300; }
.sheetbar .dots { height: 25px; }
.hscroll {
  width: 532px;
  height: 18px;
  margin: 4px 0 0 8px;
  flex-shrink: 0;
  display: flex;
}
.hbtn {
  width: 17px;
  height: 18px;
  flex-shrink: 0;
  box-sizing: border-box;
  background: #9a9a9a;
  border: 1px solid #4b4b4b;
  display: flex;
  align-items: center;
  justify-content: center;
}
.hthumb {
  width: 463px;
  margin-left: 2px;
  background: #9a9a9a;
  border: 1px solid #565656;
  box-sizing: border-box;
}
.htrack { flex: 1; background: #4f4f4f; }

/* status bar */
.status {
  flex: 1;
  display: flex;
  align-items: center;
  background: #5b5b5b;
  border-top: 1px solid #474747;
  color: #d8d8d8;
  font-size: 12px;
  padding-left: 7px;
}
.macro { margin-left: 18px; stroke: #d8d8d8; stroke-width: 1; }
.views {
  margin-left: auto;
  display: flex;
  align-self: stretch;
  width: 126px;
  flex-shrink: 0;
}
.view {
  flex: 1;
  display: flex;
  align-items: center;
  justify-content: center;
}
.view.on { background: #767676; }
.view svg { stroke: #e2e2e2; stroke-width: 1; }
.zoombar {
  width: 133px;
  margin-left: 8px;
  display: flex;
  align-items: center;
  gap: 6px;
  flex-shrink: 0;
  box-sizing: border-box;
}
.zminus { width: 8px; height: 2px; background: #d8d8d8; }
.zplus {
  width: 9px;
  height: 9px;
  background:
    linear-gradient(#e2e2e2, #e2e2e2) center / 9px 2px no-repeat,
    linear-gradient(#e2e2e2, #e2e2e2) center / 2px 9px no-repeat;
}
.slider {
  flex: 1;
  height: 1.500px;
  background: #d0d0d0;
  display: flex;
  align-items: center;
  justify-content: center;
}
.slider i { width: 6px; height: 13px; background: #d8d8d8; flex-shrink: 0; }
.pct100 { width: 38px; margin-left: 15px; flex-shrink: 0; font-size: 11.500px; }

/* callout */
.callout {
  position: absolute;
  left: 120px;
  top: 270px;
  width: 390px;
  height: 200px;
  z-index: 3;
}
.callout svg {
  fill: #128a5c;
  stroke: #f5f8f6;
  stroke-width: 5;
  stroke-linejoin: round;
  paint-order: stroke;
  filter: drop-shadow(1px 2px 2px rgba(0, 0, 0, 0.4));
}
.calltext {
  position: absolute;
  left: 104px;
  top: 63px;
  width: 273px;
  height: 122px;
  display: flex;
  align-items: center;
  justify-content: center;
  color: #eaf6f0;
  font-size: 43.500px;
}
</style>
